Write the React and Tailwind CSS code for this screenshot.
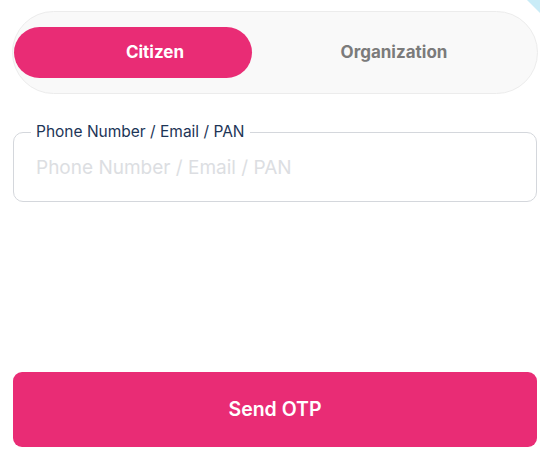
export default function App() {
  return (
    <div className="relative w-[540px] h-[452px] bg-white overflow-hidden" style={{ fontFamily: "Inter, 'Noto Sans', sans-serif" }}>
      <div className="absolute -top-[14px] -right-[14px] w-[24px] h-[24px] rotate-45 bg-[#c9ecf7]" />
      <div className="pl-[12px] pr-[2px] pt-[11px]">
        <div className="h-[83px] rounded-full bg-[#f9f9f9] border border-[#ececec] flex items-center pl-[1px] pr-[1px]">
          <button className="w-[238px] h-[51px] rounded-full bg-[#e92c75] text-white text-[17px] font-bold pl-[44px]">Citizen</button>
          <button className="flex-1 h-[51px] text-[#7b7b7b] text-[17px] font-bold">Organization</button>
        </div>
        <fieldset className="mt-[29px] ml-[1px] mr-[1px] h-[79px] rounded-[10px] border border-[#d4d7dc] px-[17px]">
          <legend className="px-[5px] text-[15.5px] text-[#1d3557] leading-[18px]">Phone Number / Email / PAN</legend>
          <input
            className="w-full mt-[13px] pl-[5px] text-[19px] text-[#333] placeholder-[#dcdee2] outline-none bg-transparent"
            placeholder="Phone Number / Email / PAN"
          />
        </fieldset>
        <button className="mt-[170px] ml-[1px] w-[524px] h-[75px] rounded-[9px] bg-[#e92c75] text-white text-[19.5px] font-semibold">Send OTP</button>
      </div>
    </div>
  );
}
